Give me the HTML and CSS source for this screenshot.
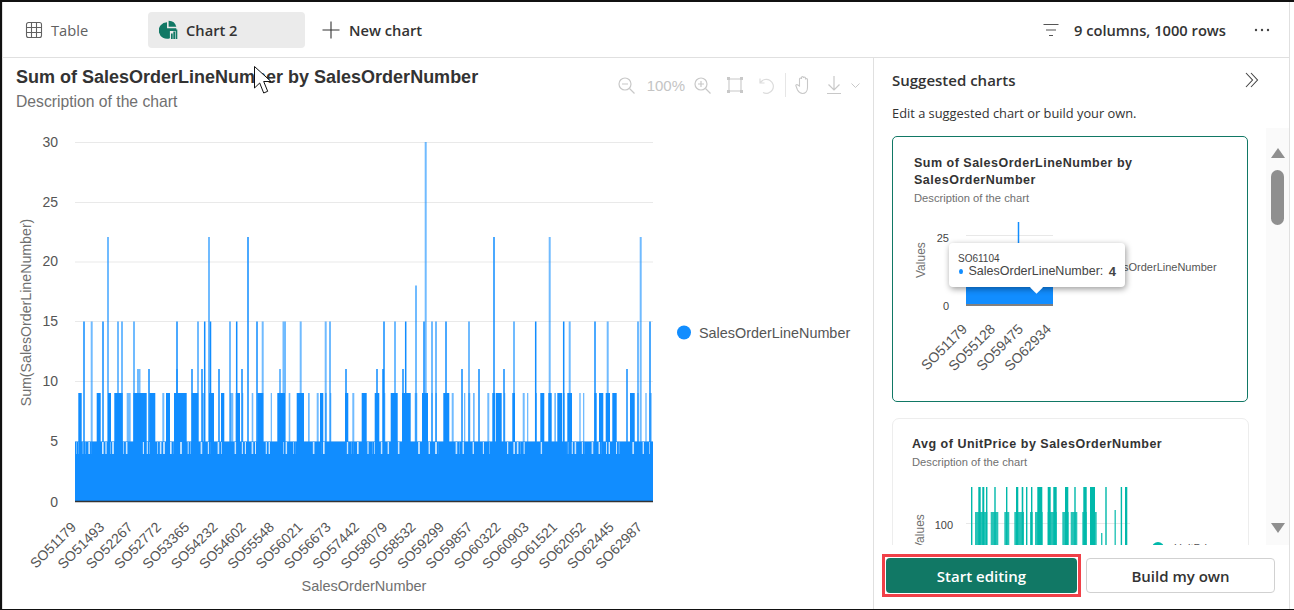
FILE: index.html
```html
<!DOCTYPE html>
<html lang="en">
<head>
    <meta charset="utf-8" />
    <meta name="viewport" content="width=device-width, initial-scale=1.0">
    <title>Suggested charts</title>
    <link rel="stylesheet" href="styles.css">
</head>
<body>
<div class="frame">
    <div class="app">
        <header class="topbar">
            <div class="tab tab-table">
                <svg class="tab-icon" width="18" height="18" viewBox="0 0 18 18"><path d="M3.500 1.500h11a2 2 0 0 1 2 2v11a2 2 0 0 1-2 2h-11a2 2 0 0 1-2-2v-11a2 2 0 0 1 2-2zM1.500 6.500h15M1.500 11.500h15M6.500 1.500v15M11.500 1.500v15" fill="none" stroke="#616161" stroke-width="1.100"/></svg>
                <span>Table</span>
            </div>
            <div class="tab tab-active">
                <svg class="tab-icon" width="19" height="20" viewBox="0 0 19 20"><path d="M8 2.200a8.300 8.300 0 1 0 2.900 16.100V11H17q.4-1.200.3-2.700H8z" fill="#117865"/><path d="M9.600 .8a7.800 7.800 0 0 1 7.700 6H9.600z" fill="#117865"/><path d="M12 13.500h1.700V19H12zM14.300 11.500H16V19h-1.700zM16.600 9.500h1.700V19h-1.700z" fill="#117865"/></svg>
                <span>Chart 2</span>
            </div>
            <div class="tab tab-new">
                <svg class="tab-icon" width="18" height="18" viewBox="0 0 18 18"><path d="M9 .5v17M.5 9h17" stroke="#333" stroke-width="1.100" fill="none"/></svg>
                <span>New chart</span>
            </div>
            <div class="topbar-right">
                <svg width="16" height="14" viewBox="0 0 16 14"><path d="M.5 1.500h15M3 7h10M6 12.500h4" stroke="#555" stroke-width="1.100" fill="none"/></svg>
                <span class="row-count">9 columns, 1000 rows</span>
                <svg class="more" width="16" height="4" viewBox="0 0 16 4"><circle cx="2" cy="2" r="1.200" fill="#444"/><circle cx="8" cy="2" r="1.200" fill="#444"/><circle cx="14" cy="2" r="1.200" fill="#444"/></svg>
            </div>
        </header>

        <div class="main">
            <section class="chart-pane">
                <div class="chart-head">
                    <div>
                        <h1 class="chart-title">Sum of SalesOrderLineNumber by SalesOrderNumber</h1>
                        <p class="chart-desc">Description of the chart</p>
                    </div>
                    <div class="chart-tools">
                        <svg width="17" height="17" viewBox="0 0 17 17"><circle cx="7" cy="7" r="6" fill="none" stroke="#c8c8c8" stroke-width="1.200"/><path d="M4 7h6M11.500 11.500l5 5" stroke="#c8c8c8" stroke-width="1.200"/></svg>
                        <span class="zoom-level">100%</span>
                        <svg width="17" height="17" viewBox="0 0 17 17"><circle cx="7" cy="7" r="6" fill="none" stroke="#c8c8c8" stroke-width="1.200"/><path d="M4 7h6M7 4v6M11.500 11.500l5 5" stroke="#c8c8c8" stroke-width="1.200"/></svg>
                        <svg class="tool-select" width="16" height="16" viewBox="0 0 16 16"><path d="M3 2h10M3 14h10M2 3v10M14 3v10" stroke="#c8c8c8" stroke-width="1.100"/><path d="M0 0h3v3H0zM13 0h3v3h-3zM0 13h3v3H0zM13 13h3v3h-3z" fill="#c8c8c8"/></svg>
                        <svg class="tool-undo" width="17" height="17" viewBox="0 0 17 17"><path d="M3.500 5.500A7 7 0 1 1 6 15.500M3 1.500v4.500h4.500" fill="none" stroke="#dcdcdc" stroke-width="1.200"/></svg>
                        <span class="tool-sep"></span>
                        <svg width="17" height="20" viewBox="0 0 17 20"><path d="M4.500 11V4a1 1 0 0 1 2 0V2.500a1 1 0 0 1 2 0V3a1 1 0 0 1 2 0v1.500a1 1 0 0 1 2 0v8c0 3.500-2 6-5 6-2.500 0-3.500-1-5-3.500L1 11c-.6-1.200 1-2 1.800-1z" fill="none" stroke="#c8c8c8" stroke-width="1.100"/></svg>
                        <svg class="tool-download" width="16" height="18" viewBox="0 0 16 18"><path d="M8 0v14M2.500 8.500L8 14l5.500-5.500M1 17.500h14" fill="none" stroke="#c8c8c8" stroke-width="1.200"/></svg>
                        <svg class="tool-chevron" width="9" height="5" viewBox="0 0 9 5"><path d="M.5 .5l4 4 4-4" fill="none" stroke="#c8c8c8"/></svg>
                    </div>
                </div>

                <svg class="main-chart" width="870" height="481" viewBox="3 128 870 481">
                    <defs>
                        <pattern id="slot-stripes" width="3.400" height="12" patternUnits="userSpaceOnUse">
                            <rect width="1.600" height="12" fill="#fff" fill-opacity="0.8"/>
                        </pattern>
                    </defs>
                    <g class="grid">
                        <path d="M75 142.500H653M75 202.500H653M75 262H653M75 321.500H653M75 381.500H653M75 441.500H653"/>
                    </g>
                    <g class="y-labels">
                        <text x="58" y="147">30</text>
                        <text x="58" y="207">25</text>
                        <text x="58" y="266">20</text>
                        <text x="58" y="326">15</text>
                        <text x="58" y="386">10</text>
                        <text x="58" y="446">5</text>
                        <text x="58" y="507">0</text>
                    </g>
                    <text class="axis-name" transform="translate(31 312.500) rotate(-90)">Sum(SalesOrderLineNumber)</text>

                    <!-- level 9 runs -->
                    <path class="bar-fill" d="M78.300 393h3.400v61h-3.400zM96.700 393h4v61h-4zM108 393h3v61h-3zM114.300 393h8.400v61h-8.400zM133.300 393h13.400v61h-13.400zM149.300 393h6v61h-6zM166 393h4v61h-4zM174 393h12.700v61H174zM191.700 393h6.600v61h-6.600zM209 393h5v61h-5zM221 393h3.300v61H221zM235.700 393h4.300v61h-4.300zM257.300 393h6v61h-6zM277.300 393h7.700v61h-7.700zM296.700 393h7.300v61h-7.300zM320 393h3.300v61H320zM345 393h3.300v61H345zM361.700 393h5v61h-5zM374.700 393h4.600v61h-4.600zM390.700 393h7v61h-7zM402 393h8.700v61H402zM422 393h6v61h-6zM443.300 393h6v61h-6zM492.300 393h3v61h-3zM496 393h5.700v61H496zM512.300 393h2.700v61h-2.700zM540.300 393h4v61h-4zM548.300 393h3.400v61h-3.400zM557.300 393h4.700v61h-4.700zM567.300 393h4.700v61h-4.700zM594.300 393h2.400v61h-2.400zM599 393h4.300v61H599zM605.700 393h4.300v61h-4.300zM612.300 393h4.400v61h-4.400zM630 393h4.700v61H630z"/>
                    <path class="bar-light" d="M126.700 393h4v61h-4zM162.300 393h2v61h-2zM202 393h2.700v61H202zM230 393h3.300v61H230zM242 393h1.300v61H242zM251.700 393h1.600v61h-1.600zM270.700 393h1.300v61h-1.300zM288.700 393h1.600v61h-1.600zM308 393h1.700v61H308zM316.700 393h2v61h-2zM325 393h1.700v61H325zM330 393h1.300v61H330zM352.300 393h2v61h-2zM383.300 393h2v61h-2zM414.700 393h2.600v61h-2.600zM431.300 393h1.400v61h-1.400zM435.300 393h1.700v61h-1.700zM451.700 393h2v61h-2zM464 393h1.300v61H464zM468.300 393h2v61h-2zM473 393h1.700v61H473zM487.300 393h2v61h-2zM504 393h1.300v61H504zM522.700 393h2v61h-2zM527 393h1.300v61H527zM535 393h2v61h-2zM554.300 393h1.700v61h-1.700zM562.700 393h2v61h-2zM579.300 393h1.400v61h-1.400zM583 393h1.300v61H583zM637.300 393h1.400v61h-1.400zM645.300 393h1.400v61h-1.400zM649.300 393h2.400v61h-2.400z"/>

                    <!-- level 15, 11, 18, 22 and 30 spikes -->
                    <path class="spike" d="M84 321.500V454M103 321.500V454M177 321.500V454M204.700 321.500V454M210.500 321.500V454M236.700 321.500V454M257 321.500V454M384 321.500V454M405.700 321.500V454M424 321.500V454M446 321.500V454M535.700 321.500V454M563.700 321.500V454M595 321.500V454M650 321.500V454M383 369V454M149 369V454M192 369V454M202 369V454M219 369V454M242 369V454M346 369V454M377 369V454M403 369V454M462 369V454M479 369V454M504 369V454M627 369V454M494 237V454M248 237V454"/>
                    <path class="spike-light" d="M91.700 321.500V454M118 321.500V454M122 321.500V454M134 321.500V454M198 321.500V454M230 321.500V454M262.700 321.500V454M283.500 321.500V454M285 321.500V454M300.700 321.500V454M325.700 321.500V454M330 321.500V454M395 321.500V454M432 321.500V454M436 321.500V454M469 321.500V454M514 321.500V454M569.700 321.500V454M607.700 321.500V454M638 321.500V454M138 369V454M139.500 369V454M177 369V454M280 369V454M108 237V454M209 237V454M549.700 237V454M640.700 237V454M416 285.500V454M425.700 142V454"/>

                    <!-- solid base, with striped slots in the 4 to 5 band -->
                    <rect class="bar-fill" x="75" y="441.500" width="578" height="59.500"/>
                    <path class="slots" d="M76 442h2.300v12H76zM82.700 442h2.600v12h-2.600zM87.300 442h4.400v12h-4.400zM101.700 442h5v12h-5zM110 442h5v12h-5zM123.300 442h5v12h-5zM141.700 442h2.300v12h-2.300zM146.700 442h3.300v12h-3.300zM157.300 442h7.700v12h-7.700zM170 442h3.300v12H170zM180 442h2.700v12H180zM187.700 442h3v12h-3zM199 442h4.300v12H199zM207.700 442h3v12h-3zM216.700 442h5v12h-5zM234 442h2.300v12H234zM241.700 442h4.300v12h-4.300zM250 442h6v12h-6zM265.700 442h4.300v12h-4.300zM283.300 442h4v12h-4zM293.300 442h2.700v12h-2.700zM312 442h3.300v12H312zM321.700 442h3.300v12h-3.300zM345.700 442h2.700v12h-2.700zM351.700 442h1.600v12h-1.600zM356.700 442h2.600v12h-2.600zM367.300 442h1.400v12h-1.400zM372 442h2.700v12H372zM380 442h2.700v12H380zM386.700 442h2.600v12h-2.600zM397.300 442h3.400v12h-3.400zM417.300 442h2.700v12h-2.700zM428.300 442h2.400v12h-2.400zM435 442h3.300v12H435zM454 442h5.300v12H454zM462.300 442h2.400v12h-2.400zM471.700 442h2.300v12h-2.300zM481.700 442h2.300v12h-2.300zM488.300 442h1.700v12h-1.700zM507 442h2v12h-2zM512 442h8.300v12H512zM522.700 442h2v12h-2zM540.300 442h2v12h-2zM566 442h2.300v12H566zM571.700 442h5v12h-5zM581.700 442h3.300v12h-3.300zM590 442h4.300v12H590zM598.300 442h3.400v12h-3.400zM606 442h4v12h-4zM616 442h3.300v12H616zM631.700 442h3.300v12h-3.300zM641.700 442h2.300v12h-2.300zM648.300 442h1.700v12h-1.700z"/>
                    <path class="axis-line" d="M75 501.500H653"/>

                    <g class="x-labels">
                        <text transform="translate(77 528) rotate(-45)">SO51179</text>
                        <text transform="translate(105.300 528) rotate(-45)">SO51493</text>
                        <text transform="translate(133.600 528) rotate(-45)">SO52267</text>
                        <text transform="translate(161.900 528) rotate(-45)">SO52772</text>
                        <text transform="translate(190.200 528) rotate(-45)">SO53365</text>
                        <text transform="translate(218.500 528) rotate(-45)">SO54232</text>
                        <text transform="translate(246.800 528) rotate(-45)">SO54602</text>
                        <text transform="translate(275.100 528) rotate(-45)">SO55548</text>
                        <text transform="translate(303.400 528) rotate(-45)">SO56021</text>
                        <text transform="translate(331.700 528) rotate(-45)">SO56673</text>
                        <text transform="translate(360 528) rotate(-45)">SO57442</text>
                        <text transform="translate(388.300 528) rotate(-45)">SO58079</text>
                        <text transform="translate(416.600 528) rotate(-45)">SO58532</text>
                        <text transform="translate(444.900 528) rotate(-45)">SO59299</text>
                        <text transform="translate(473.200 528) rotate(-45)">SO59857</text>
                        <text transform="translate(501.500 528) rotate(-45)">SO60322</text>
                        <text transform="translate(529.800 528) rotate(-45)">SO60903</text>
                        <text transform="translate(558.100 528) rotate(-45)">SO61521</text>
                        <text transform="translate(586.400 528) rotate(-45)">SO62052</text>
                        <text transform="translate(614.700 528) rotate(-45)">SO62445</text>
                        <text transform="translate(643 528) rotate(-45)">SO62987</text>
                    </g>
                    <text class="axis-name axis-name-x" x="364" y="591">SalesOrderNumber</text>

                    <circle cx="684" cy="332.500" r="7" fill="#118dff"/>
                    <text class="legend-text" x="699" y="338">SalesOrderLineNumber</text>
                </svg>
            </section>

            <aside class="panel">
                <div class="panel-head">
                    <div class="panel-title-row">
                        <h2 class="panel-title">Suggested charts</h2>
                        <svg width="14" height="16" viewBox="0 0 14 16"><path d="M1 1l6.500 7L1 15M6 1l6.500 7L6 15" fill="none" stroke="#424242" stroke-width="1.100"/></svg>
                    </div>
                    <p class="panel-desc">Edit a suggested chart or build your own.</p>
                </div>

                <div class="scroll-area">
                    <div class="cards">
                        <div class="card card-selected">
                            <div class="card-head">
                                <h3 class="card-title">Sum of SalesOrderLineNumber by SalesOrderNumber</h3>
                                <p class="card-desc">Description of the chart</p>
                            </div>
                            <svg class="mini-chart" width="354" height="190" viewBox="893 210 354 190">
                                <path d="M966 235.500H1053" stroke="#e8e8e8"/>
                                <rect x="966" y="270" width="87" height="34" fill="#118dff"/>
                                <path d="M966 305H1053" stroke="#808080" stroke-width="2"/>
                                <path d="M1018.500 222V250" stroke="#118dff" stroke-width="1.500"/>
                                <text class="mini-tick" x="949" y="242">25</text>
                                <text class="mini-tick" x="949" y="310">0</text>
                                <text class="mini-axis" transform="translate(925 278) rotate(-90)">Values</text>
                                <text class="mini-legend" x="1101" y="271">SalesOrderLineNumber</text>
                                <g class="mini-x">
                                    <text transform="translate(968 330) rotate(-45)">SO51179</text>
                                    <text transform="translate(996 330) rotate(-45)">SO55128</text>
                                    <text transform="translate(1024 330) rotate(-45)">SO59475</text>
                                    <text transform="translate(1052 330) rotate(-45)">SO62934</text>
                                </g>
                            </svg>
                            <div class="tooltip">
                                <div class="tooltip-key">SO61104</div>
                                <div class="tooltip-row"><span class="tooltip-dot"></span>SalesOrderLineNumber: <b>4</b></div>
                            </div>
                        </div>

                        <div class="card card-plain">
                            <div class="card-head card-head-wide">
                                <h3 class="card-title">Avg of UnitPrice by SalesOrderNumber</h3>
                                <p class="card-desc">Description of the chart</p>
                            </div>
                            <svg class="mini-chart" width="354" height="190" viewBox="893 473 354 190">
                                <path d="M966 523.500H1130" stroke="#e8e8e8"/>
                                <text class="mini-tick" x="953" y="529">100</text>
                                <text class="mini-axis" transform="translate(924 550) rotate(-90)">Values</text>
                                <path class="teal" d="M971 487h1.400v80H971zM978.300 487h2.400v80h-2.400zM982.300 487h2v80h-2zM986 487h1.400v80H986zM994.300 487h1.400v80h-1.400zM1006 487h1.400v80h-1.400zM1016 487h2.300v80H1016zM1021.700 487h1.600v80h-1.600zM1026 487h1.400v80H1026zM1031 487h1.400v80H1031zM1037.300 487h5v80h-5zM1047.700 487h3v80h-3zM1053.300 487h3.400v80h-3.400zM1065 487h3.300v80H1065zM1074.300 487h1.400v80h-1.400zM1083.300 487h3.400v80h-3.400zM1090 487h5v80h-5zM1105.300 487h1.400v80h-1.400zM1120.700 487h1.400v80h-1.400zM1125 487h2.300v80H1125z"/>
                                <path class="teal-light" d="M975 512h12.300v55H975zM990.700 512h7.600v55h-7.600zM1004.300 512h5v55h-5zM1014.300 512h9.700v55h-9.700zM1030 512h2.700v55H1030zM1035 512h7.700v55H1035zM1047.700 512h9v55h-9zM1062.300 512h6.400v55h-6.400zM1070.700 512h6.600v55h-6.600zM1082.300 512h4.400v55h-4.400zM1090 512h6.700v55H1090zM1101 533h1.400v34H1101zM1114.500 510h1.400v57h-1.400z"/>
                                <circle cx="1158" cy="548" r="6" fill="#01b8aa"/>
                                <text class="mini-legend" x="1174" y="552">UnitPrice</text>
                            </svg>
                        </div>
                    </div>

                    <div class="scrollbar">
                        <span class="arrow-up"></span>
                        <span class="thumb"></span>
                        <span class="arrow-down"></span>
                    </div>
                </div>

                <div class="panel-foot">
                    <div class="btn-highlight">
                        <button class="btn btn-primary" type="button">Start editing</button>
                    </div>
                    <button class="btn btn-default" type="button">Build my own</button>
                </div>
            </aside>
        </div>
    </div>

    <svg class="cursor" width="19" height="28" viewBox="0 0 19 28"><path d="M.5 .5V22l5.200-5 4 10 4-1.700-4-9.800h7.300z" fill="#fff" stroke="#111" stroke-width="1"/></svg>
</div>
</body>
</html>
```

FILE: styles.css
```css
* {
    box-sizing: border-box;
}
html,
body {
    margin: 0;
    height: 100%;
    overflow: hidden;
    background: #fff;
}
h1,
h2,
h3,
p {
    margin: 0;
}
.frame {
    position: relative;
    height: 610px;
    padding-right: 4px;
    border-top: 2px solid #111;
    border-bottom: 1px solid #111;
    border-left: 2px solid #111;
    font-family: "Open Sans", "Noto Sans", sans-serif;
    color: #333;
}
.app {
    display: flex;
    flex-direction: column;
    height: 100%;
    border-left: 1px solid #e0e0e0;
    border-right: 1px solid #e0e0e0;
}

/* top bar */
.topbar {
    display: flex;
    align-items: center;
    flex: none;
    height: 56px;
    padding: 1px 19px 0 11px;
    border-bottom: 1px solid #e0e0e0;
}
.tab {
    display: flex;
    align-items: center;
    height: 36px;
    font-size: 14.700px;
    font-weight: 600;
}
.tab-table {
    width: 134px;
    padding-left: 11px;
    color: #616161;
    font-weight: 400;
}
.tab-active {
    width: 157px;
    padding-left: 11px;
    border-radius: 4px;
    background: #ebebeb;
}
.tab-new {
    margin-left: 17px;
}
.tab-new .tab-icon {
    margin-right: 9px;
}
.tab-icon {
    margin-right: 8px;
}
.topbar-right {
    display: flex;
    align-items: center;
    margin-left: auto;
}
.row-count {
    margin-left: 15px;
    font-size: 14.700px;
    font-weight: 600;
}
.more {
    margin-left: 28px;
}

/* chart pane */
.main {
    display: flex;
    flex: 1;
    min-height: 0;
}
.chart-pane {
    flex: none;
    width: 871px;
    border-right: 1px solid #e0e0e0;
}
.chart-head {
    display: flex;
    justify-content: space-between;
    height: 70px;
    padding: 7px 13px 0 13px;
}
.chart-title {
    font-family: "Liberation Sans", Arial, sans-serif;
    font-size: 18px;
    line-height: 24px;
    white-space: nowrap;
    color: #333;
}
.chart-desc {
    margin-top: 3px;
    font-family: "Liberation Sans", Arial, sans-serif;
    font-size: 15.700px;
    line-height: 20px;
    color: #707070;
}
.chart-tools {
    display: flex;
    align-items: center;
    height: 24px;
    margin-top: 8px;
}
.zoom-level {
    margin: 0 9px 0 12px;
    font-family: "Liberation Sans", Arial, sans-serif;
    font-size: 15px;
    color: #c4c4c4;
}
.tool-select {
    margin-left: 16px;
}
.tool-undo {
    margin-left: 14px;
}
.tool-sep {
    width: 1px;
    height: 24px;
    margin: 0 9px 0 11px;
    background: #e6e6e6;
}
.tool-download {
    margin-left: 14px;
}
.tool-chevron {
    margin-left: 9px;
}
.main-chart {
    display: block;
}
.main-chart text,
.mini-chart text {
    font-family: "Liberation Sans", Arial, sans-serif;
}
.grid path {
    fill: none;
    stroke: #e9e9e9;
    stroke-width: 1;
}
.y-labels text {
    font-size: 14px;
    fill: #555;
    text-anchor: end;
}
.axis-name {
    font-size: 14.200px;
    fill: #707070;
    text-anchor: middle;
}
.axis-name-x {
    font-size: 14.500px;
}
.x-labels text {
    font-size: 14px;
    fill: #555;
    text-anchor: end;
}
.legend-text {
    font-size: 14.400px;
    fill: #555;
}
.bar-fill {
    fill: #118dff;
}
.bar-light {
    fill: #118dff;
    fill-opacity: 0.6;
}
.spike {
    fill: none;
    stroke: #118dff;
    stroke-width: 1.500;
}
.spike-light {
    fill: none;
    stroke: #118dff;
    stroke-opacity: 0.6;
    stroke-width: 2;
}
.slots {
    fill: url(#slot-stripes);
}
.axis-line {
    fill: none;
    stroke: #333;
    stroke-width: 1.500;
}

/* suggested charts */
.panel {
    display: flex;
    flex-direction: column;
    flex: 1;
    min-width: 0;
}
.panel-head {
    flex: none;
    height: 70px;
    padding: 11px 0 0 18px;
}
.panel-title-row {
    display: flex;
    align-items: center;
    justify-content: space-between;
    padding-right: 30px;
}
.panel-title {
    font-size: 15px;
    font-weight: 600;
    line-height: 22px;
}
.panel-desc {
    margin-top: 12px;
    font-size: 12.850px;
    line-height: 20px;
}
.scroll-area {
    display: flex;
    flex: 1;
    justify-content: space-between;
    min-height: 0;
    overflow: hidden;
}
.cards {
    flex: none;
    width: 357px;
    margin-left: 18px;
    padding-top: 8px;
}
.card {
    position: relative;
    height: 266px;
    background: #fff;
}
.card-selected {
    margin-right: 1px;
    margin-bottom: 16px;
    border: 1px solid #117865;
    border-radius: 5px;
}
.card-plain {
    border: 1px solid #ededed;
    border-radius: 7px;
}
.card-head {
    height: 73px;
    padding: 18px 40px 0 21px;
}
.card-head-wide {
    height: 54px;
    padding: 17px 20px 0 19px;
}
.card-title {
    font-family: "Liberation Sans", Arial, sans-serif;
    font-size: 12.500px;
    line-height: 17px;
    letter-spacing: 0.5px;
    color: #333;
}
.card-desc {
    margin-top: 2px;
    font-family: "Liberation Sans", Arial, sans-serif;
    font-size: 11.200px;
    line-height: 15px;
    color: #707070;
}
.mini-chart {
    display: block;
}
.mini-tick {
    font-size: 11px;
    fill: #444;
    text-anchor: end;
}
.mini-axis {
    font-size: 12px;
    fill: #707070;
}
.mini-legend {
    font-size: 11px;
    fill: #555;
}
.mini-x text {
    font-size: 14px;
    fill: #555;
    text-anchor: end;
}
.teal {
    fill: #01b8aa;
}
.teal-light {
    fill: #01b8aa;
    fill-opacity: 0.85;
}
.tooltip {
    position: absolute;
    left: 56px;
    top: 106px;
    width: 176px;
    height: 44px;
    padding: 11px 9px 0;
    border-radius: 4px;
    background: #fff;
    box-shadow: 1px 2px 6px rgba(0, 0, 0, 0.4);
    font-family: "Liberation Sans", Arial, sans-serif;
    color: #444;
}
.tooltip::after {
    content: "";
    position: absolute;
    left: 83px;
    bottom: -5px;
    width: 9px;
    height: 9px;
    background: #fff;
    transform: rotate(45deg);
}
.tooltip-key {
    font-size: 10px;
    line-height: 10px;
}
.tooltip-row {
    display: flex;
    align-items: center;
    font-size: 12.500px;
    line-height: 15px;
    white-space: pre;
}
.tooltip-dot {
    width: 5px;
    height: 5px;
    margin-left: 1px;
    margin-right: 6px;
    border-radius: 50%;
    background: #118dff;
}
.tooltip b {
    margin-left: 2px;
    font-size: 13px;
}
.scrollbar {
    display: flex;
    flex-direction: column;
    align-items: center;
    flex: none;
    width: 23px;
    padding-top: 20px;
    background: #fafafa;
}
.arrow-up,
.arrow-down {
    width: 0;
    height: 0;
    border-left: 7.500px solid transparent;
    border-right: 7.500px solid transparent;
}
.arrow-up {
    border-bottom: 10px solid #8f8f8f;
}
.arrow-down {
    margin-top: 298px;
    border-top: 10px solid #8f8f8f;
}
.thumb {
    width: 13px;
    height: 55px;
    margin-top: 12px;
    border-radius: 7px;
    background: #8f8f8f;
}
.panel-foot {
    display: flex;
    flex: none;
    gap: 5px;
    height: 64px;
    padding: 9px 14px 0 8px;
}
.btn-highlight {
    flex: none;
    width: 199px;
    height: 43px;
    padding: 1px;
    border: 3px solid #f04048;
}
.btn {
    height: 35px;
    border-radius: 4px;
    font-family: "Open Sans", "Noto Sans", sans-serif;
    font-size: 15px;
    font-weight: 600;
}
.btn-primary {
    width: 100%;
    border: none;
    background: #117865;
    color: #fff;
}
.btn-default {
    flex: 1;
    margin-top: 4px;
    border: 1px solid #d1d1d1;
    background: #fff;
    color: #333;
}
.cursor {
    position: absolute;
    left: 252px;
    top: 64px;
}
```
